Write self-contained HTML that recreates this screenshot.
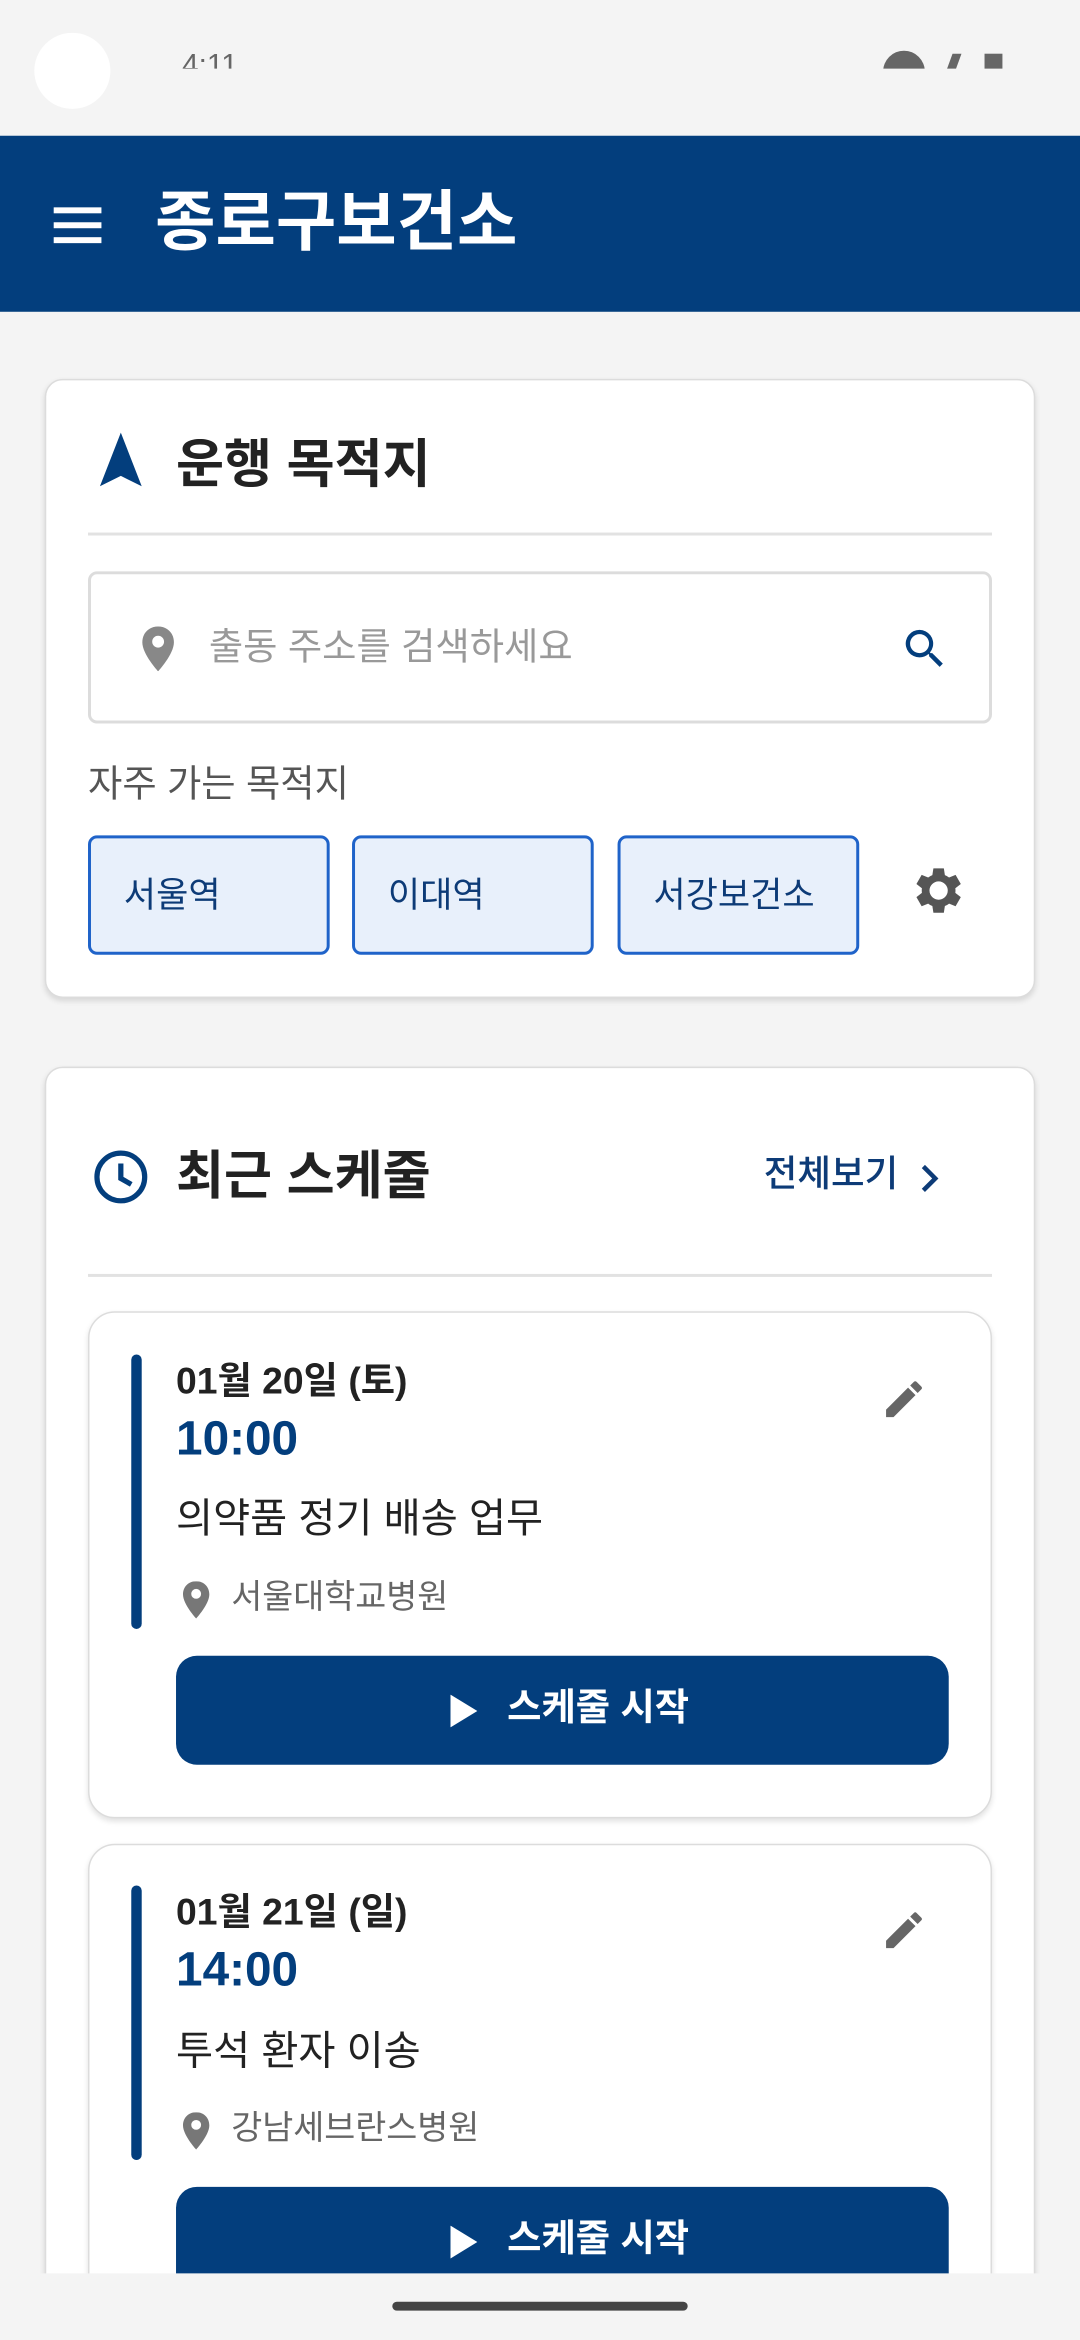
<!DOCTYPE html>
<html><head><meta charset="utf-8">
<style>
html,body{margin:0;padding:0;background:#f4f4f4;width:1080px;height:2340px;overflow:hidden;}
#w{position:relative;width:1080px;height:2340px;overflow:hidden;}
#s{width:724px;height:1568px;overflow:hidden;transform:scale(1.49171);transform-origin:0 0;position:absolute;left:0;top:0;background:#f4f4f4;font-family:"Liberation Sans","Noto Sans CJK KR",sans-serif;color:#222;}
.a{position:absolute;}
.card{position:absolute;background:#fff;border:1.5px solid #dcdcdc;border-radius:12px;box-shadow:0 2px 4px rgba(0,0,0,.12);box-sizing:border-box;}
.t{position:absolute;white-space:nowrap;line-height:1;}
.chip{position:absolute;top:560px;width:162px;height:80px;box-sizing:border-box;background:#e8f0fb;border:2px solid #1f63c9;border-radius:6px;font-size:23.5px;color:#0d3b77;line-height:76px;padding-left:22px;}
.btn{position:absolute;left:118px;width:518px;height:73px;background:#033e7d;border-radius:14px;color:#fff;font-size:25px;font-weight:bold;}
</style></head><body><div id="w"><div id="s">
<div class="a" style="left:23px;top:22px;width:51px;height:51px;border-radius:50%;background:#fff"></div>
<div class="a" style="left:0;top:0;width:724px;height:46px;overflow:hidden"><div class="t" style="left:122px;top:34px;font-size:20px;color:#666">4:11</div>
<div class="a" style="left:592px;top:34px;width:28px;height:28px;border-radius:50%;background:#666"></div>
<div class="a" style="left:636px;top:36px;width:6px;height:14px;background:#666;transform:skewX(-20deg)"></div>
<div class="a" style="left:660px;top:36px;width:12px;height:14px;background:#666"></div></div>
<div class="a" style="left:0;top:91px;width:724px;height:118px;background:#033e7d"></div>
<div class="a" style="left:36px;top:139px;width:32px;height:4px;background:#fff;box-shadow:0 10px 0 #fff,0 20px 0 #fff"></div>
<div class="t" style="left:104px;top:128px;font-size:44px;font-weight:bold;color:#fff">종로구보건소</div>

<div class="card" style="left:30px;top:254px;width:664px;height:415px"></div>
<svg class="a" style="left:64px;top:289px" width="34" height="38" viewBox="0 0 34 38"><path d="M17 1 L31 37 L17 30 L3 37Z" fill="#033e7d"/></svg>
<div class="t" style="left:118px;top:294px;font-size:35px;font-weight:bold">운행 목적지</div>
<div class="a" style="left:59px;top:357px;width:606px;height:2px;background:#e2e2e2"></div>
<div class="a" style="left:59px;top:383px;width:606px;height:102px;border:2px solid #dcdcdc;border-radius:6px;box-sizing:border-box"></div>
<svg class="a" style="left:94px;top:420px" width="24" height="30" viewBox="0 0 24 34"><path d="M12 0C5 0 0 5 0 12c0 9 12 22 12 22s12-13 12-22C24 5 19 0 12 0zm0 16a4.5 4.5 0 1 1 0-9 4.5 4.5 0 0 1 0 9z" fill="#888"/></svg>
<div class="t" style="left:140px;top:422px;font-size:25px;color:#999">출동 주소를 검색하세요</div>
<svg class="a" style="left:603px;top:418px" width="34" height="34" viewBox="0 0 24 24"><path d="M15.5 14h-.8l-.3-.3A6.5 6.5 0 1 0 9.5 16a6.5 6.5 0 0 0 4.2-1.6l.3.3v.8l5 5 1.5-1.5-5-5zm-6 0a4.5 4.5 0 1 1 0-9 4.5 4.5 0 0 1 0 9z" fill="#033e7d"/></svg>
<div class="t" style="left:59px;top:514px;font-size:25px;color:#555">자주 가는 목적지</div>
<div class="chip" style="left:59px">서울역</div>
<div class="chip" style="left:236px">이대역</div>
<div class="chip" style="left:414px">서강보건소</div>
<svg class="a" style="left:607px;top:576px" width="42" height="42" viewBox="0 0 24 24"><path d="M19.1 12.9a7 7 0 0 0 0-1.8l2.1-1.6-2-3.5-2.5 1a7 7 0 0 0-1.6-.9L14.7 3.5h-4l-.4 2.6a7 7 0 0 0-1.6.9l-2.5-1-2 3.5 2.1 1.6a7 7 0 0 0 0 1.8l-2.1 1.6 2 3.5 2.5-1c.5.4 1 .7 1.6.9l.4 2.6h4l.4-2.6c.6-.2 1.1-.5 1.6-.9l2.5 1 2-3.5-2.1-1.6zM12.7 15.5a3.5 3.5 0 1 1 0-7 3.5 3.5 0 0 1 0 7z" fill="#555"/></svg>

<div class="card" style="left:30px;top:715px;width:664px;height:900px"></div>
<svg class="a" style="left:62px;top:770px" width="38" height="38" viewBox="0 0 38 38"><circle cx="19" cy="19" r="16" fill="none" stroke="#033e7d" stroke-width="3.5"/><path d="M19 10v10l7 4" fill="none" stroke="#033e7d" stroke-width="3.5"/></svg>
<div class="t" style="left:118px;top:771px;font-size:35px;font-weight:bold">최근 스케줄</div>
<div class="t" style="left:512px;top:776px;font-size:24.5px;color:#0d3b77;font-weight:500">전체보기</div>
<svg class="a" style="left:614px;top:778px" width="20" height="24" viewBox="0 0 20 24"><path d="M5 4l8 8-8 8" fill="none" stroke="#0d3b77" stroke-width="3"/></svg>
<div class="a" style="left:59px;top:854px;width:606px;height:2px;background:#e2e2e2"></div>

<div class="card" style="left:59px;top:879px;width:606px;height:340px;border-radius:18px"></div>
<div class="a" style="left:88px;top:908px;width:7px;height:184px;background:#033e7d;border-radius:4px"></div>
<div class="t" style="left:118px;top:914px;font-size:25px;font-weight:bold">01월 20일 (토)</div>
<div class="t" style="left:118px;top:948px;font-size:32px;font-weight:bold;color:#033e7d">10:00</div>
<div class="t" style="left:118px;top:1005px;font-size:27px">의약품 정기 배송 업무</div>
<svg class="a" style="left:122px;top:1060px" width="19" height="25" viewBox="0 0 24 34"><path d="M12 0C5 0 0 5 0 12c0 9 12 22 12 22s12-13 12-22C24 5 19 0 12 0zm0 16a4.5 4.5 0 1 1 0-9 4.5 4.5 0 0 1 0 9z" fill="#777"/></svg>
<div class="t" style="left:155px;top:1060px;font-size:22.6px;color:#666">서울대학교병원</div>
<svg class="a" style="left:590px;top:922px" width="32" height="32" viewBox="0 0 24 24"><path d="M3 17.25V21h3.75L17.8 9.94l-3.75-3.75L3 17.25zM20.7 7.04a1 1 0 0 0 0-1.41l-2.34-2.34a1 1 0 0 0-1.41 0l-1.83 1.83 3.75 3.75 1.83-1.83z" fill="#666"/></svg>
<div class="btn" style="top:1110px"><svg class="a" style="left:184px;top:26px" width="18" height="22" viewBox="0 0 18 22"><path d="M0 0L18 11 0 22Z" fill="#fff"/></svg><div class="t" style="left:222px;top:23px">스케줄 시작</div></div>

<div class="card" style="left:59px;top:1236px;width:606px;height:340px;border-radius:18px"></div>
<div class="a" style="left:88px;top:1264px;width:7px;height:184px;background:#033e7d;border-radius:4px"></div>
<div class="t" style="left:118px;top:1270px;font-size:25px;font-weight:bold">01월 21일 (일)</div>
<div class="t" style="left:118px;top:1304px;font-size:32px;font-weight:bold;color:#033e7d">14:00</div>
<div class="t" style="left:118px;top:1362px;font-size:27px">투석 환자 이송</div>
<svg class="a" style="left:122px;top:1416px" width="19" height="25" viewBox="0 0 24 34"><path d="M12 0C5 0 0 5 0 12c0 9 12 22 12 22s12-13 12-22C24 5 19 0 12 0zm0 16a4.5 4.5 0 1 1 0-9 4.5 4.5 0 0 1 0 9z" fill="#777"/></svg>
<div class="t" style="left:155px;top:1416px;font-size:22.6px;color:#666">강남세브란스병원</div>
<svg class="a" style="left:590px;top:1278px" width="32" height="32" viewBox="0 0 24 24"><path d="M3 17.25V21h3.75L17.8 9.94l-3.75-3.75L3 17.25zM20.7 7.04a1 1 0 0 0 0-1.41l-2.34-2.34a1 1 0 0 0-1.41 0l-1.83 1.83 3.75 3.75 1.83-1.83z" fill="#666"/></svg>
<div class="btn" style="top:1466px"><svg class="a" style="left:184px;top:26px" width="18" height="22" viewBox="0 0 18 22"><path d="M0 0L18 11 0 22Z" fill="#fff"/></svg><div class="t" style="left:222px;top:23px">스케줄 시작</div></div>

<div class="a" style="left:0;top:1524px;width:724px;height:44px;background:#f4f4f4"></div>
<div class="a" style="left:263px;top:1543px;width:198px;height:6px;border-radius:3px;background:#444"></div>
</div></div></body></html>
